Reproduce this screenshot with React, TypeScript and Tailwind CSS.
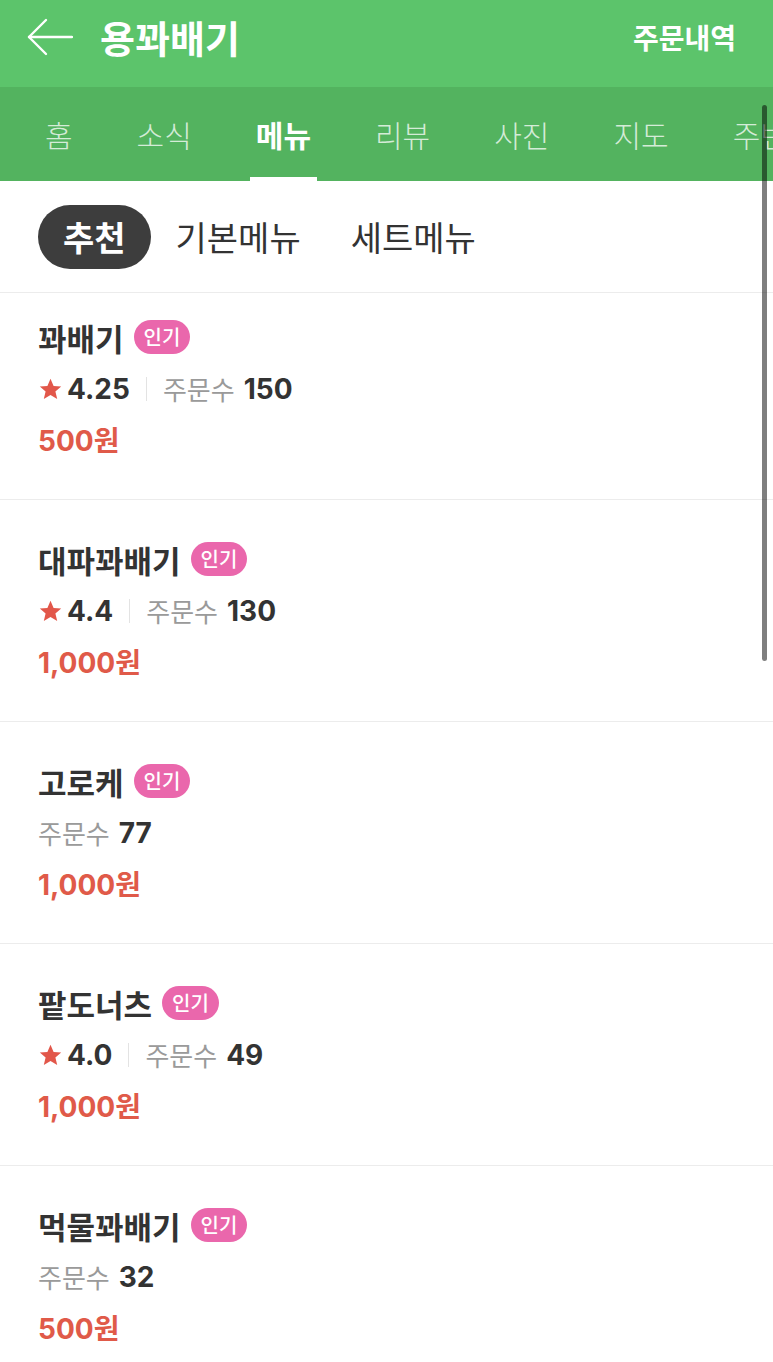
import React from "react";

const KR = '"Noto Sans CJK KR", "Noto Sans", sans-serif';
const NUM = 'Inter, "Noto Sans CJK KR", sans-serif';

type Item = { name: string; rating?: string; orders: string; price: string };

const items: Item[] = [
  { name: "꽈배기", rating: "4.25", orders: "150", price: "500원" },
  { name: "대파꽈배기", rating: "4.4", orders: "130", price: "1,000원" },
  { name: "고로케", orders: "77", price: "1,000원" },
  { name: "팥도너츠", rating: "4.0", orders: "49", price: "1,000원" },
  { name: "먹물꽈배기", orders: "32", price: "500원" },
];

const tabs = ["홈", "소식", "메뉴", "리뷰", "사진", "지도", "주변"];

function Star() {
  return (
    <svg width="25" height="24" viewBox="0 0 24 24" className="mr-[4px]">
      <path
        d="M12 1.8l3.1 7.1 7.6.6-5.8 5 1.8 7.5L12 18l-6.7 4 1.8-7.5-5.8-5 7.6-.6z"
        fill="#e2574a"
      />
    </svg>
  );
}

export default function App() {
  return (
    <div className="relative w-[773px] h-[1362px] overflow-hidden bg-white" style={{ fontFamily: KR }}>
      {/* header */}
      <div className="h-[87px] bg-[#5cc46b] flex items-center pb-[13px] pl-[27px] pr-[37px]">
        <svg width="46" height="38" viewBox="0 0 46 38" fill="none" stroke="white" strokeWidth="2.4" strokeLinecap="round" strokeLinejoin="round">
          <path d="M2 19H45" />
          <path d="M19 2L2 19L19 36" />
        </svg>
        <div className="ml-[27px] text-white text-[38px] font-bold leading-none">용꽈배기</div>
        <div className="ml-auto text-white text-[28px] font-bold leading-none">주문내역</div>
      </div>
      {/* tabs */}
      <div className="h-[94px] bg-[#53b35f] flex items-stretch pl-[39px] gap-[52px] whitespace-nowrap">
        {tabs.map((t) => {
          const active = t === "메뉴";
          return (
            <div key={t} className="relative flex items-center px-[6px]">
              <span
                className={
                  active
                    ? "text-white text-[30px] font-bold leading-none"
                    : "text-white/75 text-[30px] font-light leading-none"
                }
              >
                {t}
              </span>
              {active && <div className="absolute left-0 right-0 bottom-0 h-[4px] bg-white" />}
            </div>
          );
        })}
      </div>
      {/* sub tabs */}
      <div className="h-[112px] flex items-center pl-[38px] border-b border-[#ececec]">
        <div className="h-[64px] px-[25px] rounded-full bg-[#3d3d3d] flex items-center text-white text-[34px] font-bold leading-none">
          추천
        </div>
        <div className="px-[25px] text-[#333] text-[34px] leading-none">기본메뉴</div>
        <div className="px-[25px] text-[#333] text-[34px] leading-none">세트메뉴</div>
      </div>
      {/* items */}
      {items.map((it, i) => (
        <div
          key={it.name}
          className={
            (i === 0 ? "pt-[18px] " : "pt-[33px] ") + "pb-[32px] pl-[38px] border-b border-[#ececec]"
          }
        >
          <div className="h-[52px] flex items-center">
            <span className="text-[31px] font-bold text-[#333] leading-none">{it.name}</span>
            <span className="ml-[10px] h-[34px] px-[10px] rounded-full bg-[#ea67ac] text-white text-[20px] font-medium flex items-center leading-none">
              인기
            </span>
          </div>
          <div className="h-[52px] flex items-center">
            {it.rating && (
              <>
                <Star />
                <span className="text-[28px] font-bold text-[#333] leading-none" style={{ fontFamily: NUM }}>
                  {it.rating}
                </span>
                <span className="mx-[16px] w-px h-[24px] bg-[#e3e3e3]" />
              </>
            )}
            <span className="text-[26px] text-[#9a9a9a] leading-none">주문수</span>
            <span className="ml-[9px] text-[28px] font-bold text-[#333] leading-none" style={{ fontFamily: NUM }}>
              {it.orders}
            </span>
          </div>
          <div className="h-[52px] flex items-center">
            <span className="text-[28px] font-bold text-[#e05a49] leading-none" style={{ fontFamily: NUM }}>
              {it.price}
            </span>
          </div>
        </div>
      ))}
      {/* scrollbar overlay */}
      <div className="absolute left-[762px] top-[105px] w-[5px] h-[556px] rounded-full bg-black/50" />
    </div>
  );
}
